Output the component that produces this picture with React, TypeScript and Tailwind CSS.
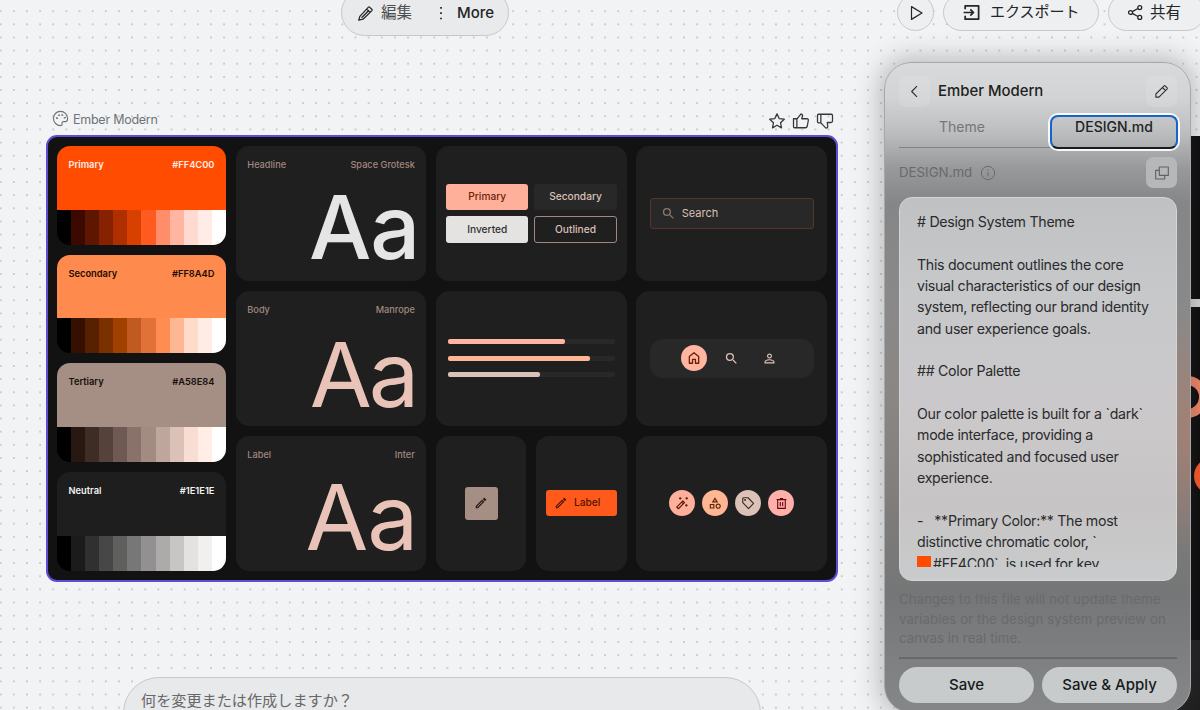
import type { ReactNode } from 'react';
import { MdOutlineCategory, MdOutlineEdit, MdPersonOutline, MdSearch } from 'react-icons/md';

const PALETTES = [
  {
    name: 'Primary',
    hex: '#FF4C00',
    color: 'bg-[#ff4c00] text-[#ffece6]',
    shades: ['#000000', '#3b0900', '#5f1600', '#872200', '#b02f00', '#d84000', '#ff5a1f', '#ff8d6a', '#ffb5a0', '#ffdad1', '#ffece7', '#ffffff'],
  },
  {
    name: 'Secondary',
    hex: '#FF8A4D',
    color: 'bg-[#ff8a4d] text-[#1c0a02]',
    shades: ['#000000', '#351000', '#572000', '#7b3000', '#a04100', '#c15a20', '#e07238', '#ff8c50', '#ffb693', '#ffdbcb', '#ffede5', '#ffffff'],
  },
  {
    name: 'Tertiary',
    hex: '#A58E84',
    color: 'bg-[#a58e84] text-[#160f0c]',
    shades: ['#000000', '#271811', '#3d2d25', '#55433b', '#6e5a52', '#887269', '#a28c82', '#bea69c', '#dbc1b7', '#f8ddd3', '#ffede6', '#ffffff'],
  },
  {
    name: 'Neutral',
    hex: '#1E1E1E',
    color: 'bg-[#1e1e1e] text-[#f2f2f2]',
    shades: ['#000000', '#1b1b1b', '#303030', '#474747', '#5f5f5e', '#787777', '#929090', '#adabaa', '#c8c6c5', '#e4e2e1', '#f2f0ef', '#ffffff'],
  },
];

const TYPE_CARDS = [
  { role: 'Headline', family: 'Space Grotesk', sample: 'text-[88px] text-[#e5e5e5] tracking-[-1px] bottom-[10px] right-[7px] font-medium' },
  { role: 'Body', family: 'Manrope', sample: 'text-[90px] text-[#e9c3b8] tracking-[-3px] bottom-[6px] right-[10px] font-normal' },
  { role: 'Label', family: 'Inter', sample: 'text-[91px] text-[#e9c3b8] tracking-[-1px] bottom-[8px] right-[9px] font-normal' },
];

const BARS = [
  { width: 70, color: 'bg-[#ffb5a0]' },
  { width: 85, color: 'bg-[#ffb693]' },
  { width: 55, color: 'bg-[#dbc1b7]' },
];

const DOC = `# Design System Theme

This document outlines the core
visual characteristics of our design
system, reflecting our brand identity
and user experience goals.

## Color Palette

Our color palette is built for a \`dark\`
mode interface, providing a
sophisticated and focused user
experience.

-   **Primary Color:** The most
distinctive chromatic color, \``;

function Icon({ size, width = 1.5, className = '', children }: { size: number; width?: number; className?: string; children: ReactNode }) {
  return (
    <svg
      width={size}
      height={size}
      viewBox="0 0 24 24"
      fill="none"
      stroke="currentColor"
      strokeWidth={width}
      strokeLinejoin="round"
      className={`shrink-0 ${className}`}
    >
      {children}
    </svg>
  );
}

function Pencil({ size, width }: { size: number; width?: number }) {
  return (
    <Icon size={size} width={width}>
      <path d="M3 21v-5L16.200 2.900q.8-.7 1.600 0l3.300 3.300q.7.8 0 1.600L8 21zM13.500 5.600l4.900 4.900" />
    </Icon>
  );
}

// Top bar pencil with the line running down its barrel.
function LinedPencil() {
  return (
    <Icon size={17} width={1.8}>
      <path d="M2.500 21.500 4 16 16.200 3q.8-.7 1.600 0l3.300 3.300q.7.8 0 1.600L8.500 20zM13.500 5.600l4.900 4.900M6.500 18 17 7.500" />
    </Icon>
  );
}

function Card({ className = '', children }: { className?: string; children: ReactNode }) {
  return <div className={`rounded-[13px] bg-[#1f1f1f] ${className}`}>{children}</div>;
}

function PaletteCard({ name, hex, color, shades }: (typeof PALETTES)[number]) {
  return (
    <div className="flex min-h-0 flex-1 flex-col overflow-hidden rounded-[13px]">
      <div className={`flex flex-1 justify-between px-[11.5px] pt-[11px] text-[9.3px] leading-[15px] font-semibold ${color}`}>
        <span>{name}</span>
        <span>{hex}</span>
      </div>
      <div className="flex h-[35px]">
        {shades.map((shade) => (
          <div key={shade} className="flex-1" style={{ backgroundColor: shade }} />
        ))}
      </div>
    </div>
  );
}

function TypeCard({ role, family, sample }: (typeof TYPE_CARDS)[number]) {
  return (
    <Card className="relative flex justify-between px-[11.5px] pt-[11px] text-[9.2px] leading-[15px] font-medium text-[#a08980]">
      <span>{role}</span>
      <span>{family}</span>
      <span className={`absolute leading-none ${sample}`}>Aa</span>
    </Card>
  );
}

function Board() {
  return (
    <div className="grid h-[447px] w-[792px] grid-cols-[169px_1fr_1fr_1fr] gap-[9.8px] rounded-[11px] border-2 border-[#5b4dd6] bg-[#121212] p-[9px] pb-[9.5px]">
      <div className="flex flex-col gap-[9.8px]">
        {PALETTES.map((p) => (
          <PaletteCard key={p.name} {...p} />
        ))}
      </div>

      <div className="grid grid-rows-3 gap-[9.8px]">
        {TYPE_CARDS.map((t) => (
          <TypeCard key={t.role} {...t} />
        ))}
      </div>

      <div className="grid grid-rows-3 gap-[9.8px]">
        <Card className="grid grid-cols-2 content-center gap-x-1.5 gap-y-1.5 px-[10px] text-[10.2px] font-medium">
          <div className="flex h-[26px] items-center justify-center rounded-[3px] bg-[#ffb09a] text-[#6d1e05]">Primary</div>
          <div className="flex h-[26px] items-center justify-center rounded-[3px] bg-[#282828] text-[#dbc1b7]">Secondary</div>
          <div className="flex h-[27px] items-center justify-center rounded-[3px] bg-[#e4e3e1] text-[#303030]">Inverted</div>
          <div className="flex h-[27px] items-center justify-center rounded-[3px] border border-[#a08980] text-[#dbc1b7]">Outlined</div>
        </Card>
        <Card className="flex flex-col justify-center gap-[11.5px] px-[11.5px]">
          {BARS.map((bar) => (
            <div key={bar.width} className="h-[5px] rounded-[2px] bg-[#282828]">
              <div className={`h-full rounded-[2px] ${bar.color}`} style={{ width: `${bar.width}%` }} />
            </div>
          ))}
        </Card>
        <div className="grid grid-cols-2 gap-[9.8px]">
          <Card className="flex items-center justify-center">
            <div className="flex size-[33px] items-center justify-center rounded-[3px] bg-[#a58e84] text-[#2b1812]">
              <MdOutlineEdit size={14} />
            </div>
          </Card>
          <Card className="flex items-center justify-center">
            <div className="flex h-[26px] w-[71px] items-center gap-[6px] rounded-[3px] bg-[#ff5a1c] pl-[8px] text-[10.2px] font-medium text-[#541400]">
              <MdOutlineEdit size={14} />
              Label
            </div>
          </Card>
        </div>
      </div>

      <div className="grid grid-rows-3 gap-[9.8px]">
        <Card className="flex items-center justify-center">
          <div className="flex h-[31px] w-[164px] items-center gap-[6px] rounded-[3px] border border-[#56362b] bg-[#282828] pl-[10px] text-[11px] text-[#dbc1b7]">
            <MdSearch size={15} className="text-[#8d7770]" />
            Search
          </div>
        </Card>
        <Card className="flex items-center justify-center">
          <div className="flex h-[39px] w-[164px] items-center justify-center gap-[12px] rounded-[13px] bg-[#282828] text-[#dbc1b7]">
            <div className="flex size-[26px] items-center justify-center rounded-full bg-[#ffb5a0] text-[#6d1e05]">
              <Icon size={14} width={2.2}>
                <path d="M4 21V9.5L12 3l8 6.5V21h-5.5v-6.5h-5V21z" />
              </Icon>
            </div>
            <div className="flex size-[26px] items-center justify-center">
              <MdSearch size={15} />
            </div>
            <div className="flex size-[26px] items-center justify-center">
              <MdPersonOutline size={15} />
            </div>
          </div>
        </Card>
        <Card className="flex items-center justify-center gap-[7px]">
          <div className="flex size-[26px] items-center justify-center rounded-full bg-[#ffb09c] text-[#5c1900]">
            <Icon size={14} width={2}>
              <path d="m3 19 10.500-10.500 2.800 2.800L5.800 21.800zM11.500 10.500l2.800 2.800" />
              <path d="M9 2v4M7 4h4M20 2v4M18 4h4M19.500 14v4M17.500 16h4" />
            </Icon>
          </div>
          <div className="flex size-[26px] items-center justify-center rounded-full bg-[#ffb693] text-[#5c2400]">
            <MdOutlineCategory size={14} />
          </div>
          <div className="flex size-[26px] items-center justify-center rounded-full bg-[#dbc1b7] text-[#3d2d25]">
            <Icon size={14} width={2}>
              <path d="M3 4.500Q3 3 4.500 3H12l9.500 9.500-8.500 9L3 11.500z" />
              <circle cx="7" cy="7" r=".7" />
            </Icon>
          </div>
          <div className="flex size-[26px] items-center justify-center rounded-full bg-[#ffb0ab] text-[#690005]">
            <Icon size={13} width={2}>
              <path d="M5 5h14v16H5zM3 4.500h18M9 3h6M9.800 9v8M14.200 9v8" />
            </Icon>
          </div>
        </Card>
      </div>
    </div>
  );
}

function BoardFrame() {
  return (
    <section className="absolute top-[108px] left-[46px] w-[792px]">
      <div className="flex h-[27px] items-center pr-[4px] pl-[6px] text-[#6f7378]">
        <Icon size={17} width={1.6} className="mt-[-7px]">
          <path d="M12 2C6 2 2 6.500 2 12s4.500 10 10 10c1.800 0 2.500-1.200 2.200-2.500-.4-1.700.3-3 2.300-3H19c2 0 3-1.800 3-4.500C22 6 17.500 2 12 2z" />
          <path d="M6.500 11.500h1M9.500 7.500h1M14 7h1M17.500 11h1" strokeWidth="2.200" strokeLinecap="round" />
        </Icon>
        <span className="mt-[-4px] ml-[4px] text-[12.500px] leading-[24px] tracking-[-0.250px]">Ember Modern</span>
        <div className="mt-[-2px] ml-auto flex gap-[6px] text-[#35383b]">
          <Icon size={18} width={1.7}>
            <path d="m12 2.500 2.900 6.300 6.800.8-5 4.700 1.300 6.800-6-3.400-6 3.400 1.300-6.800-5-4.700 6.800-.8z" />
          </Icon>
          <Icon size={18} width={1.7}>
            <path d="M2 9h4.500v12H3.500Q2 21 2 19.500zM6.500 9.500 12 2.500q2.500.5 2 3L13 9h7q2 0 1.800 2l-1.500 8q-.5 2-2.300 2H6.500" />
          </Icon>
          <Icon size={18} width={1.7}>
            <path d="M2 4.500Q2 3 3.500 3h3v11.500H3.500Q2 14.500 2 13zM6.500 3h14Q22 3 22 4.500V12q0 2-2 2h-5l.7 5q0 2.500-2.500 2.500L6.500 14.500" />
          </Icon>
        </div>
      </div>
      <Board />
    </section>
  );
}

// The neighbouring frame, mostly hidden behind the side panel.
function NeighbourFrame() {
  return (
    <div className="absolute top-[136px] left-[1130px] flex h-[574px] w-[70px] flex-col gap-[8px] overflow-hidden bg-[#d6d7d8]">
      <div className="h-[163px] bg-[#0b0b0b]" />
      <div className="relative flex-1 overflow-hidden bg-[#0b0b0b]">
        <div className="absolute top-[69px] left-[36px] size-[42px] rounded-full border-[9px] border-[#f58767]" />
        <div className="absolute top-[151px] left-[64px] size-[36px] rounded-full bg-[#ff5a28]" />
        <div className="absolute bottom-0 left-0 h-[70px] w-full bg-[#1e1e1e]" />
      </div>
    </div>
  );
}

function SidePanel() {
  return (
    <aside className="absolute top-[62px] left-[884px] flex h-[651px] w-[307px] flex-col rounded-[27px] border border-[#a5a7a8] bg-[radial-gradient(50px_120px_at_100%_370px,rgba(190,125,105,0.5),transparent),linear-gradient(180deg,#d9dadb_0px,#d2d3d4_35px,#bcbdbe_70px,#98999a_105px,#858687_140px,#8a8989_240px,#8a8683_340px,#807d7b_440px,#757677_530px,#7e8081_600px,#858788_650px)] pr-[13px] pl-[14px] shadow-[0_0_24px_5px_rgba(60,60,60,0.3)]">
      <div className="flex h-[50px] items-end">
        <div className="mb-[6px] flex size-[31px] items-center justify-center rounded-[7px] bg-white/10 text-[#2b2d2f]">
          <Icon size={15} width={1.8}>
            <path d="M16 3.500 7.500 12l8.500 8.500" />
          </Icon>
        </div>
        <h2 className="ml-[8px] text-[14.900px] leading-[44px] font-medium text-[#1d1f21]">Ember Modern</h2>
        <div className="mb-[6px] ml-auto flex size-[31px] items-center justify-center rounded-[7px] bg-white/10 text-[#2b2d2f]">
          <Pencil size={15} width={1.7} />
        </div>
      </div>

      <div className="flex h-[42px] pt-[2px] text-[14px] leading-[22px]">
        <div className="mb-[7px] flex-1 border-b border-[#7f8182] pt-px text-[#747678]">
          <span className="block w-[126px] text-center">Theme</span>
        </div>
        <div className="mr-[-1px] h-[34px] w-[128px] rounded-[8px] border-[2.500px] border-[#1765cc] border-b-[#191b1d] text-center text-[14px] leading-[20px] font-medium text-[#202224] ring-2 ring-white/90">
          DESIGN.md
        </div>
      </div>

      <div className="flex h-[42px] items-center text-[13.300px] text-[#696b6d]">
        <span className="mt-[-7px]">DESIGN.md</span>
        <Icon size={16} className="mt-[-7px] ml-[8px]">
          <circle cx="12" cy="12" r="10" />
          <path d="M12 10.500V17M12 6.500v1.800" />
        </Icon>
        <div className="mt-[-7px] ml-auto flex size-[31px] items-center justify-center rounded-[7px] bg-[#b5b7b8]">
          <Icon size={16} width={1.700} className="text-[#606264]">
            <path d="M8 3h13.500v12.500H8zM8 8H2.500v13H16v-5.500" />
          </Icon>
        </div>
      </div>

      <div className="h-[384px] shrink-0 rounded-[13px] border border-[#d3d5d6] bg-[linear-gradient(180deg,#bfc1c2,#c7c8ca_25%,#cbc8ca_60%,#c7c4c5_80%,#c9cbcc)] px-[17px] pt-[13px] pb-[13px]">
        <div className="h-[356px] overflow-hidden text-[14.200px] leading-[21.350px] tracking-[-0.300px] text-[#292b2d]">
          <p className="whitespace-pre">{DOC}</p>
          <p className="flex items-center whitespace-pre">
            <span className="mr-[2px] h-[14px] w-[14px] bg-[#ff4c00]" />
            {'#FF4C00`  is used for key'}
          </p>
        </div>
      </div>

      <p className="mt-[9px] text-[13.200px] leading-[19.700px] tracking-[0.100px] whitespace-nowrap text-[#686a6b]">
        Changes to this file will not update theme
        <br />
        variables or the design system preview on
        <br />
        canvas in real time.
      </p>

      <div className="mt-[8px] flex gap-[8px] border-t-2 border-[#666869] pt-[8px] text-[15px] font-medium text-[#17191b]">
        <button className="h-[36px] flex-1 rounded-full bg-[#c8cbcc]">Save</button>
        <button className="h-[36px] flex-1 rounded-full bg-[#c8cbcc]">Save &amp; Apply</button>
      </div>
    </aside>
  );
}

function TopBar() {
  return (
    <header className="absolute top-[-11px] left-[341px] flex w-[864px] items-start font-['Inter','Noto_Sans_CJK_JP',sans-serif] text-[#232527]">
      <div className="flex h-[47px] w-[168px] items-center rounded-full border border-[#c6c8ca] bg-[#e8eaeb] pt-px pl-[15px]">
        <LinedPencil />
        <span className="ml-[7px] text-[15.500px] text-[#4a4c4e]">編集</span>
        <Icon size={16} width={2.600} className="ml-[21px]">
          <path d="M12 3v2.500M12 11v2.500M12 19v2.500" />
        </Icon>
        <span className="mt-px ml-[8px] text-[15px] font-medium">More</span>
      </div>
      <div className="mt-[5px] ml-auto flex h-[37px] gap-[9px]">
        <div className="flex w-[37px] items-center justify-center rounded-full border border-[#c6c8ca] bg-[#edeff0]">
          <Icon size={18} width={1.600}>
            <path d="M6 3.500 20 12 6 20.500z" />
          </Icon>
        </div>
        <div className="flex w-[156px] items-center rounded-full border border-[#c6c8ca] bg-[#edeff0] pl-[18px] text-[15px]">
          <Icon size={19} width={2.200}>
            <path d="M4 8V3.500h17v17H4V16M2 12h12M10.500 8l4 4-4 4" />
          </Icon>
          <span className="ml-[9px]">エクスポート</span>
        </div>
        <div className="flex w-[97px] items-center rounded-full border border-[#c6c8ca] bg-[#edeff0] pl-[18px] text-[15.500px]">
          <Icon size={17} width={1.800}>
            <circle cx="5" cy="12" r="2.800" />
            <circle cx="18" cy="5" r="2.800" />
            <circle cx="18" cy="19" r="2.800" />
            <path d="m7.500 10.700 8-4.300M7.500 13.300l8 4.300" />
          </Icon>
          <span className="ml-[6px]">共有</span>
        </div>
      </div>
    </header>
  );
}

export default function App() {
  return (
    <main className="relative h-[710px] w-[1200px] overflow-hidden bg-[#f1f3f5] bg-[radial-gradient(circle,#c8cbce_0.7px,transparent_1.2px)] bg-[length:13.15px_13.15px] bg-[position:-5.9px_4.6px] font-['Inter',sans-serif]">
      <BoardFrame />
      <NeighbourFrame />
      <SidePanel />
      <TopBar />
      <div className="absolute top-[677px] left-[123px] h-[90px] w-[638px] rounded-[36px] border border-[#c6c8ca] bg-[#e8e9ea] px-[17px] pt-[12px] font-['Inter','Noto_Sans_CJK_JP',sans-serif] text-[15.150px] leading-[22px] text-[#66686a]">
        何を変更または作成しますか？
      </div>
    </main>
  );
}
